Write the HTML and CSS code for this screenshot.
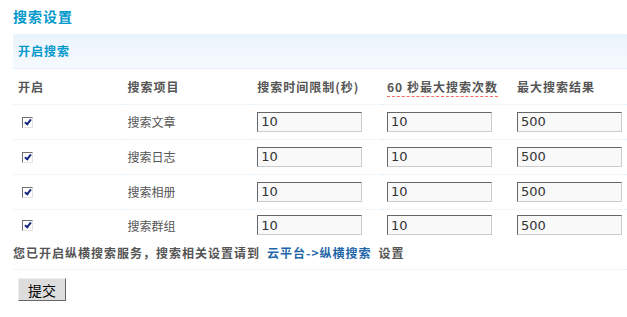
FILE: index.html
```html
<!DOCTYPE html>
<html lang="zh-CN">
<head>
    <meta charset="UTF-8">
    <title>搜索设置</title>
    <link rel="stylesheet" href="styles.css">
</head>
<body>
    <div class="container">
        <h3 class="page-title">搜索设置</h3>
        <div class="section-bar">开启搜索</div>

        <table class="tb">
            <tr class="header">
                <th class="c1">开启</th>
                <th class="c2">搜索项目</th>
                <th class="c3">搜索时间限制(秒)</th>
                <th class="c4"><span class="tip">60 秒最大搜索次数</span></th>
                <th>最大搜索结果</th>
            </tr>
            <tr>
                <td><span class="check"></span></td>
                <td>搜索文章</td>
                <td><input class="txt" type="text" value="10"></td>
                <td><input class="txt" type="text" value="10"></td>
                <td><input class="txt" type="text" value="500"></td>
            </tr>
            <tr>
                <td><span class="check"></span></td>
                <td>搜索日志</td>
                <td><input class="txt" type="text" value="10"></td>
                <td><input class="txt" type="text" value="10"></td>
                <td><input class="txt" type="text" value="500"></td>
            </tr>
            <tr>
                <td><span class="check"></span></td>
                <td>搜索相册</td>
                <td><input class="txt" type="text" value="10"></td>
                <td><input class="txt" type="text" value="10"></td>
                <td><input class="txt" type="text" value="500"></td>
            </tr>
            <tr class="last">
                <td><span class="check"></span></td>
                <td>搜索群组</td>
                <td><input class="txt" type="text" value="10"></td>
                <td><input class="txt" type="text" value="10"></td>
                <td><input class="txt" type="text" value="500"></td>
            </tr>
        </table>

        <div class="notice">您已开启纵横搜索服务，搜索相关设置请到<a href="#">云平台-&gt;纵横搜索</a>设置</div>

        <div class="actions">
            <button class="btn" type="button">提交</button>
        </div>
    </div>
</body>
</html>
```

FILE: styles.css
```css
body {
    margin: 0;
    font-family: "Noto Sans CJK SC", "DejaVu Sans", sans-serif;
    font-size: 12px;
    color: #555;
    background: #fff;
}
.container {
    padding-left: 13px;
}
.page-title {
    margin: 0;
    padding-top: 6px;
    height: 28px;
    line-height: 20px;
    font-size: 14px;
    font-weight: bold;
    letter-spacing: 1px;
    color: #0099cc;
}
.section-bar {
    height: 35px;
    line-height: 33px;
    padding-left: 5px;
    font-weight: bold;
    letter-spacing: 1px;
    color: #0099cc;
    background: linear-gradient(#eaf3fc, #f6fafe);
    border-bottom: 1px dotted #deeffb;
    box-sizing: border-box;
}
.tb {
    width: 100%;
    border-collapse: collapse;
}
.tb th,
.tb td {
    height: 35px;
    padding: 0 5px;
    text-align: left;
    border-bottom: 1px dotted #deeffb;
    box-sizing: border-box;
}
.tb th {
    font-weight: bold;
    letter-spacing: 1px;
    color: #555;
    padding-top: 1px;
    white-space: nowrap;
}
.tb .last td {
    border-bottom: none;
    height: 32px;
}
.c1 { width: 110px; }
.c2 { width: 130px; }
.c3 { width: 130px; }
.c4 { width: 130px; }
.tip {
    border-bottom: 1px dashed #ff6666;
    padding-bottom: 1px;
}
.check {
    display: inline-block;
    width: 11px;
    height: 11px;
    margin-left: 4px;
    margin-top: -3px;
    box-sizing: border-box;
    border: 1px solid;
    border-color: #707070 #e4e4e4 #e4e4e4 #707070;
    background: #fff;
    position: relative;
    vertical-align: middle;
}
.check::after {
    content: "";
    position: absolute;
    left: 3px;
    top: 0;
    width: 2px;
    height: 5px;
    border: solid #1a2a80;
    border-width: 0 2px 2px 0;
    transform: rotate(38deg);
}
.txt {
    width: 105px;
    height: 20px;
    box-sizing: border-box;
    padding: 0 3px;
    margin: 0;
    font-family: "DejaVu Sans", sans-serif;
    font-size: 13px;
    color: #333;
    background: #f9f9f9;
    border: 1px solid;
    border-color: #666 #ccc #ccc #666;
    outline: none;
}
.notice {
    height: 29px;
    line-height: 22px;
    padding-top: 1px;
    box-sizing: border-box;
    font-weight: bold;
    letter-spacing: 1px;
    color: #555;
    border-bottom: 1px dotted #deeffb;
}
.notice a {
    margin: 0 7px;
    color: #2366a8;
    text-decoration: none;
}
.actions {
    padding: 8px 5px;
}
.btn {
    width: 48px;
    height: 23px;
    padding: 0;
    font-family: "Noto Sans CJK SC", sans-serif;
    font-size: 14px;
    color: #000;
    background: #ddd;
    border: 1px solid;
    border-color: #eee #666 #666 #eee;
    cursor: pointer;
}
```
